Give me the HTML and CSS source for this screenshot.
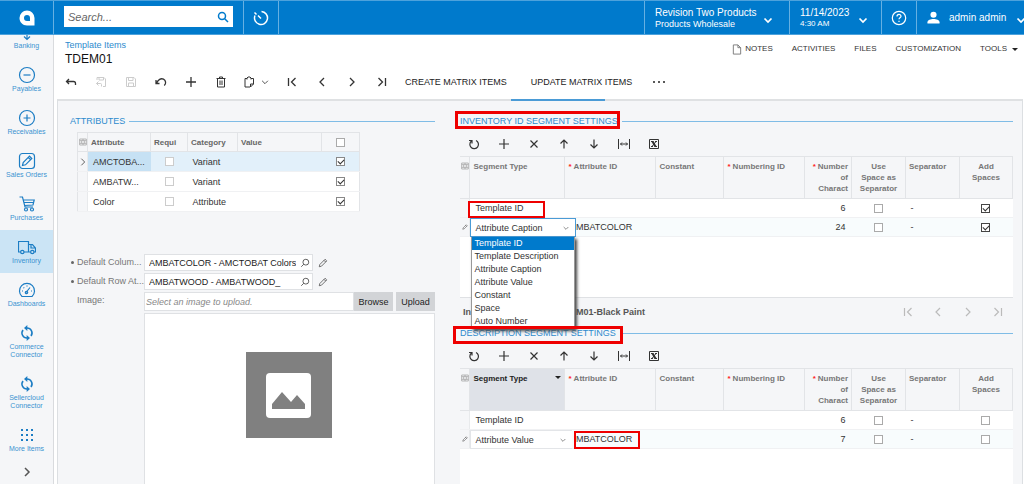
FILE: index.html
```html
<!DOCTYPE html>
<html lang="en">
<head>
<meta charset="utf-8">
<title>Template Items - TDEM01</title>
<link rel="stylesheet" href="styles.css">
</head>
<body>
<svg class="defs" aria-hidden="true">
  <symbol id="i-down" viewBox="0 0 12 12"><path d="M2.500 4.500 6 8l3.500-3.500"/></symbol>
  <symbol id="i-prev" viewBox="0 0 12 12"><path d="M8 2 4 6l4 4"/></symbol>
  <symbol id="i-next" viewBox="0 0 12 12"><path d="M4 2l4 4-4 4"/></symbol>
  <symbol id="i-first" viewBox="0 0 12 12"><path d="M2.500 2v8M9.500 2l-4 4 4 4"/></symbol>
  <symbol id="i-last" viewBox="0 0 12 12"><path d="M9.500 2v8M2.500 2l4 4-4 4"/></symbol>
  <symbol id="i-back" viewBox="0 0 12 12"><path d="M4 3 1.500 5.500 4 8M1.500 5.500h7q2 0 2 2V9"/></symbol>
  <symbol id="i-save" viewBox="0 0 12 12"><path d="M1.500 1.500h7.500l1.500 1.500v7.500h-9zM3.500 1.500v3h4.500v-3M3.500 10.500v-3.500h5v3.500"/></symbol>
  <symbol id="i-saveclose" viewBox="0 0 12 12"><path d="M2 4V1.500h7l1.500 1.500v7.500H8M4 1.500v2.500h4.500v-2.500M3.500 5.500 1.500 7.500l2 2M1.500 7.500h4q1 0 1 1v2"/></symbol>
  <symbol id="i-undo" viewBox="0 0 12 12"><path d="M1 4v3.500h3.500M1.500 7.200C3 3.500 6 2 8.500 3.200c2.500 1.300 2.800 4.300.8 6.300"/></symbol>
  <symbol id="i-plus" viewBox="0 0 12 12"><path d="M6 1v10M1 6h10"/></symbol>
  <symbol id="i-x" viewBox="0 0 12 12"><path d="m2.500 2.500 7 7M9.500 2.500l-7 7"/></symbol>
  <symbol id="i-trash" viewBox="0 0 12 12"><path d="M1.500 2.500h9M4.500 2.500V1h3v1.500M2.500 2.500v8.500h7V2.500M5 4.500v4.500M7 4.500v4.500"/></symbol>
  <symbol id="i-clip" viewBox="0 0 12 12"><path d="M7 11H2V2.500h2M8 2.500h2.500v5.500L7.500 11V8h3M4 3.500V2l1-1h2l1 1v1.500"/></symbol>
  <symbol id="i-up" viewBox="0 0 12 12"><path d="M6 2v8.500M2.500 5.500 6 2l3.500 3.500"/></symbol>
  <symbol id="i-dn" viewBox="0 0 12 12"><path d="M6 1.500V10M2.500 6.500 6 10l3.500-3.500"/></symbol>
  <symbol id="i-refresh" viewBox="0 0 12 12"><path d="M3.500 3A4.300 4.300 0 1 0 8 2.500M1 2.500h3v3"/></symbol>
  <symbol id="i-fit" viewBox="0 0 12 12"><path d="M.5 1v10M11.500 1v10M2.500 6h7M4 4.500 2.500 6 4 7.500M8 4.500 9.500 6 8 7.500"/></symbol>
  <symbol id="i-excel" viewBox="0 0 12 12"><path d="M1.500 1.500h9v9h-9z"/><path class="thick" d="m4.500 3.500 3 5"/><path d="M8 3.500 4 8.500M3 3.500h2.500M7 3.500h2M3 8.500h2M6.500 8.500H9"/></symbol>
  <symbol id="i-cols" viewBox="0 0 12 12"><path d="M1 1.500h10v9H1zM1 4h10M1 8h10M6 1.500V4M6 8v2.500M4 4v4M8 4v4"/></symbol>
  <symbol id="i-pencil" viewBox="0 0 12 12"><path d="m1.500 10.500.7-2.700L8.500 1.500l2 2-6.300 6.300zM7.200 2.800l2 2"/></symbol>
  <symbol id="i-search" viewBox="0 0 12 12"><circle cx="7" cy="5" r="3.500"/><path d="M4.500 7.500 1.500 10.500"/></symbol>
  <symbol id="i-sync" viewBox="0 0 24 24"><path d="M12 4.500A7.500 7.500 0 0 1 18 16.500M12 19.500A7.500 7.500 0 0 1 6 7.500"/><path class="solid" d="M12.500 0v9L7.500 4.500zM11.500 15v9l5-4.500z"/></symbol>
</svg>

<header class="topbar">
  <a class="logo" href="#" aria-label="Home"><svg viewBox="0 0 16 16"><path fill-rule="evenodd" d="M8 .5A7.500 7.500 0 0 0 .5 8c0 4.200 3.300 7.500 7.500 7.500h7.500V8A7.500 7.500 0 0 0 8 .5zM8 5a3 3 0 0 1 3 3v3H8a3 3 0 1 1 0-6z"/></svg></a>
  <form class="searchcell">
    <label class="search"><input type="search" placeholder="Search..." aria-label="Search"><svg class="mag" viewBox="0 0 12 12"><circle cx="5" cy="5" r="3.500"/><path d="m7.500 7.500 3.500 3.500"/></svg></label>
  </form>
  <button class="cell narrow" aria-label="Recent"><svg class="ic16" viewBox="0 0 16 16"><path d="M8.500 1.500A6.500 6.500 0 1 1 2 5.500M8 8.500 5 5.500M1.500 2.500l2 2"/></svg></button>
  <span class="grow"></span>
  <button class="cell company"><span><b>Revision Two Products</b><small>Products Wholesale</small></span><svg class="ic12"><use href="#i-down"/></svg></button>
  <button class="cell date"><span><b>11/14/2023</b><small>4:30 AM</small></span><svg class="ic12"><use href="#i-down"/></svg></button>
  <button class="cell narrow" aria-label="Help"><svg class="ic16 help" viewBox="0 0 16 16"><circle cx="8" cy="8" r="6.700"/><path d="M6 6.500c0-2.700 4-2.700 4-.2 0 1.500-2 1.500-2 3M8 10.800v1.200"/></svg></button>
  <button class="cell user"><svg class="person" viewBox="0 0 14 14"><circle cx="7" cy="4" r="3.300"/><path d="M.5 13.500V12C.5 9.500 4 8.500 7 8.500s6.500 1 6.500 3.500v1.500z"/></svg><b>admin admin</b><svg class="ic12"><use href="#i-down"/></svg></button>
</header>

<div class="shell">
  <nav class="side">
    <a href="#"><svg viewBox="0 0 18 18"><circle cx="9" cy="7" r="4"/><path d="M9 11v6M6 13.500l3 3 3-3"/></svg>Banking</a>
    <a href="#"><svg viewBox="0 0 18 18"><circle cx="9" cy="9" r="7.500"/><path d="M5.500 9h7"/></svg>Payables</a>
    <a href="#"><svg viewBox="0 0 18 18"><circle cx="9" cy="9" r="7.500"/><path d="M5.500 9h7M9 5.500v7"/></svg>Receivables</a>
    <a href="#"><svg viewBox="0 0 18 18"><rect x="1.500" y="1.500" width="15" height="15" rx="3"/><path d="m4.500 13.500.7-3L11.500 4.200l2.300 2.300-6.300 6.300zM10.300 5.500l2.200 2.200"/></svg>Sales Orders</a>
    <a href="#"><svg viewBox="0 0 18 18"><path d="M1.500 2h3l2.500 10h8M5.200 5h11L15 10l-8.500.5M5.800 7.500h9.800"/><circle cx="8" cy="14.500" r="1.500"/><circle cx="14" cy="14.500" r="1.500"/></svg>Purchases</a>
    <a href="#" class="on"><svg viewBox="0 0 18 18"><path d="M2.500 14H.5V3.500h10V14H6M10.500 6.500h4l3 3.500v4H16M12.500 14h-2M13 6.500V10h4"/><circle cx="4.300" cy="14" r="1.700"/><circle cx="14.300" cy="14" r="1.700"/></svg>Inventory</a>
    <a href="#"><svg viewBox="0 0 18 18"><path d="M4 15.500a7.500 7.500 0 1 1 10 0zM8 11.500l4-5M4 10h1M9 4.500v1M13 10h1M5.500 6.500l.7.700"/><circle cx="8.500" cy="11.500" r="1.200"/></svg>Dashboards</a>
    <a href="#" class="tall"><svg viewBox="0 0 24 24" class="sync"><use href="#i-sync"/></svg>Commerce<br>Connector</a>
    <a href="#" class="tall"><svg viewBox="0 0 24 24" class="sync"><use href="#i-sync"/></svg>Sellercloud<br>Connector</a>
    <a href="#"><svg viewBox="0 0 18 18"><path class="solid" d="M3 3h2v2H3zM8 3h2v2H8zM13 3h2v2h-2zM3 8h2v2H3zM8 8h2v2H8zM13 8h2v2h-2zM3 13h2v2H3zM8 13h2v2H8zM13 13h2v2h-2z"/></svg>More Items</a>
    <button class="expand" aria-label="Expand menu"><svg class="ic12"><use href="#i-next"/></svg></button>
  </nav>

  <main class="main">
    <div class="pagehead">
      <div class="titlerow">
        <div><a class="crumb" href="#">Template Items</a><h1>TDEM01</h1></div>
        <div class="links">
          <button><svg class="note" viewBox="0 0 10 12"><path d="M1 1h5l3 3v7H1zM6 1v3h3"/></svg>NOTES</button>
          <button>ACTIVITIES</button><button>FILES</button><button>CUSTOMIZATION</button>
          <button>TOOLS<i class="caret"></i></button>
        </div>
      </div>
      <div class="toolbar">
        <button class="tb" aria-label="Back"><svg class="ic12"><use href="#i-back"/></svg></button>
        <button class="tb" aria-label="Save and close" disabled><svg class="ic12"><use href="#i-saveclose"/></svg></button>
        <button class="tb" aria-label="Save" disabled><svg class="ic12"><use href="#i-save"/></svg></button>
        <button class="tb" aria-label="Undo"><svg class="ic12"><use href="#i-undo"/></svg></button>
        <button class="tb" aria-label="Add"><svg class="ic12"><use href="#i-plus"/></svg></button>
        <button class="tb fine" aria-label="Delete"><svg class="ic12"><use href="#i-trash"/></svg></button>
        <button class="tb wide fine" aria-label="Clipboard"><svg class="ic12"><use href="#i-clip"/></svg><svg class="ic10"><use href="#i-down"/></svg></button>
        <button class="tb" aria-label="First"><svg class="ic12"><use href="#i-first"/></svg></button>
        <button class="tb" aria-label="Previous"><svg class="ic12"><use href="#i-prev"/></svg></button>
        <button class="tb" aria-label="Next"><svg class="ic12"><use href="#i-next"/></svg></button>
        <button class="tb" aria-label="Last"><svg class="ic12"><use href="#i-last"/></svg></button>
        <button class="tbtext">CREATE MATRIX ITEMS</button>
        <button class="tbtext">UPDATE MATRIX ITEMS</button>
        <button class="tb dots" aria-label="More"><i></i><i></i><i></i></button>
      </div>
    </div>

    <div class="content">
      <i class="tabline"></i>
      <section class="left">
        <h2>ATTRIBUTES</h2>
        <table class="grid attrs">
          <colgroup><col class="w10"><col class="w63"><col class="w37"><col class="w50"><col><col class="w38"></colgroup>
          <thead><tr><th><svg class="ic8"><use href="#i-cols"/></svg></th><th>Attribute</th><th>Requi</th><th>Category</th><th>Value</th><th class="c"><input type="checkbox" aria-label="Select all"></th></tr></thead>
          <tbody>
            <tr class="sel"><td class="ind"><svg class="ic10"><use href="#i-next"/></svg></td><td class="cur">AMCTOBA...</td><td class="c"><input type="checkbox" class="pale" aria-label="Required"></td><td>Variant</td><td></td><td class="c"><input type="checkbox" checked aria-label="Active"></td></tr>
            <tr><td class="ind"></td><td>AMBATW...</td><td class="c"><input type="checkbox" class="pale" aria-label="Required"></td><td>Variant</td><td></td><td class="c"><input type="checkbox" checked aria-label="Active"></td></tr>
            <tr><td class="ind"></td><td>Color</td><td class="c"><input type="checkbox" class="pale" aria-label="Required"></td><td>Attribute</td><td></td><td class="c"><input type="checkbox" checked aria-label="Active"></td></tr>
          </tbody>
        </table>
        <div class="fields">
          <div class="row"><label class="req" for="dc">Default Colum...</label><span class="lookup"><input id="dc" value="AMBATCOLOR - AMCTOBAT Colors"><svg class="ic10"><use href="#i-search"/></svg></span><button class="edit" aria-label="Edit"><svg class="ic10"><use href="#i-pencil"/></svg></button></div>
          <div class="row"><label class="req" for="dr">Default Row At...</label><span class="lookup"><input id="dr" value="AMBATWOOD - AMBATWOOD_"><svg class="ic10"><use href="#i-search"/></svg></span><button class="edit" aria-label="Edit"><svg class="ic10"><use href="#i-pencil"/></svg></button></div>
          <div class="row"><label for="im">Image:</label><input id="im" class="file" placeholder="Select an image to upload."><button class="gray">Browse</button><button class="gray upload">Upload</button></div>
        </div>
        <div class="preview"><svg viewBox="0 0 86 86"><path fill="#808080" d="M0 0h86v86H0z"/><rect x="20" y="21" width="45" height="45" rx="4" fill="#fff"/><path fill="#808080" d="M26 57v-5l10-12 9 10 6-7 8 9v5z"/></svg></div>
      </section>

      <section class="right">
        <div class="hl hl-head"><h2>INVENTORY ID SEGMENT SETTINGS</h2></div>
        <div class="gridbar">
          <button aria-label="Refresh"><svg class="ic12"><use href="#i-refresh"/></svg></button><button aria-label="Add row"><svg class="ic12"><use href="#i-plus"/></svg></button><button aria-label="Delete row"><svg class="ic12"><use href="#i-x"/></svg></button><button aria-label="Move up"><svg class="ic12"><use href="#i-up"/></svg></button><button aria-label="Move down"><svg class="ic12"><use href="#i-dn"/></svg></button><button class="fine" aria-label="Fit columns"><svg class="ic12"><use href="#i-fit"/></svg></button><button class="fine" aria-label="Export to Excel"><svg class="ic12"><use href="#i-excel"/></svg></button>
        </div>
        <div class="gridbox first">
          <table class="grid seg">
            <colgroup><col class="w10"><col class="w95"><col class="w91"><col class="w68"><col><col class="w47"><col class="w54"><col class="w54"><col class="w53"></colgroup>
            <thead><tr><th><svg class="ic8"><use href="#i-cols"/></svg></th><th>Segment Type</th><th><em>*</em>Attribute ID</th><th>Constant</th><th><em>*</em>Numbering ID</th><th class="r"><em>*</em>Number<br>of<br>Charact</th><th class="c">Use<br>Space as<br>Separator</th><th>Separator</th><th class="c">Add<br>Spaces</th></tr></thead>
            <tbody>
              <tr><td class="ind"></td><td class="host">Template ID<i class="mark mark-type"></i></td><td></td><td></td><td></td><td class="r">6</td><td class="c"><input type="checkbox" aria-label="Use space"></td><td>-</td><td class="c last"><input type="checkbox" class="dark" checked aria-label="Add spaces"></td></tr>
              <tr class="act"><td class="ind"><svg class="ic6"><use href="#i-pencil"/></svg></td>
                <td class="host">
                  <div class="combo open"><select aria-label="Segment type"><option>Attribute Caption</option></select><svg class="ic8"><use href="#i-down"/></svg>
                    <ul role="listbox"><li class="hot" role="option">Template ID</li><li role="option">Template Description</li><li role="option">Attribute Caption</li><li role="option">Attribute Value</li><li role="option">Constant</li><li role="option">Space</li><li role="option">Auto Number</li></ul>
                  </div>
                </td><td class="after">MBATCOLOR</td><td></td><td></td><td class="r">24</td><td class="c"><input type="checkbox" aria-label="Use space"></td><td>-</td><td class="c last"><input type="checkbox" class="dark" checked aria-label="Add spaces"></td></tr>
            </tbody>
          </table>
        </div>
        <div class="foot"><span class="lead">In</span><span>M01-Black Paint</span>
          <div class="pager"><button disabled aria-label="First page"><svg class="ic12"><use href="#i-first"/></svg></button><button disabled aria-label="Previous page"><svg class="ic12"><use href="#i-prev"/></svg></button><button disabled aria-label="Next page"><svg class="ic12"><use href="#i-next"/></svg></button><button disabled aria-label="Last page"><svg class="ic12"><use href="#i-last"/></svg></button></div>
        </div>
        <div class="hl hl-desc"><h2>DESCRIPTION SEGMENT SETTINGS</h2></div>
        <div class="gridbar">
          <button aria-label="Refresh"><svg class="ic12"><use href="#i-refresh"/></svg></button><button aria-label="Add row"><svg class="ic12"><use href="#i-plus"/></svg></button><button aria-label="Delete row"><svg class="ic12"><use href="#i-x"/></svg></button><button aria-label="Move up"><svg class="ic12"><use href="#i-up"/></svg></button><button aria-label="Move down"><svg class="ic12"><use href="#i-dn"/></svg></button><button class="fine" aria-label="Fit columns"><svg class="ic12"><use href="#i-fit"/></svg></button><button class="fine" aria-label="Export to Excel"><svg class="ic12"><use href="#i-excel"/></svg></button>
        </div>
        <div class="gridbox fill">
          <table class="grid seg">
            <colgroup><col class="w10"><col class="w95"><col class="w91"><col class="w68"><col><col class="w47"><col class="w54"><col class="w54"><col class="w53"></colgroup>
            <thead><tr><th><svg class="ic8"><use href="#i-cols"/></svg></th><th class="sorted">Segment Type<i class="caret"></i></th><th><em>*</em>Attribute ID</th><th>Constant</th><th><em>*</em>Numbering ID</th><th class="r"><em>*</em>Number<br>of<br>Charact</th><th class="c">Use<br>Space as<br>Separator</th><th>Separator</th><th class="c">Add<br>Spaces</th></tr></thead>
            <tbody>
              <tr><td class="ind"></td><td>Template ID</td><td></td><td></td><td></td><td class="r">6</td><td class="c"><input type="checkbox" aria-label="Use space"></td><td>-</td><td class="c last"><input type="checkbox" aria-label="Add spaces"></td></tr>
              <tr class="act"><td class="ind"><svg class="ic6"><use href="#i-pencil"/></svg></td>
                <td class="host"><div class="combo"><select aria-label="Segment type"><option>Attribute Value</option></select><svg class="ic8"><use href="#i-down"/></svg></div></td>
                <td class="after host">MBATCOLOR<i class="mark mark-attr"></i></td><td></td><td></td><td class="r">7</td><td class="c"><input type="checkbox" aria-label="Use space"></td><td>-</td><td class="c last"><input type="checkbox" aria-label="Add spaces"></td></tr>
            </tbody>
          </table>
        </div>
      </section>
    </div>
  </main>
</div>
</body>
</html>
```

FILE: styles.css
```css
*, *::before, *::after { box-sizing: border-box; }
body {
  margin: 0;
  height: 100vh;
  display: flex;
  flex-direction: column;
  overflow: hidden;
  background: #fff;
  color: #333;
  font: 9px/12px "Liberation Sans", Arial, sans-serif;
}
button, input, select { font: inherit; color: inherit; margin: 0; }
button { border: 0; padding: 0; background: none; white-space: nowrap; }
a { text-decoration: none; }
h1, h2, ul { margin: 0; padding: 0; font-weight: normal; }
.defs { position: absolute; width: 0; height: 0; }
svg { fill: none; stroke: currentColor; stroke-width: 1; flex: none; }
.solid { fill: currentColor; stroke: none; }
.thick { stroke-width: 2; }
.ic6 { width: 6px; height: 6px; }
.ic8 { width: 8px; height: 8px; }
.ic10 { width: 10px; height: 10px; }
.ic12 { width: 12px; height: 12px; }
.ic16 { width: 16px; height: 16px; }
.caret { display: inline-block; border: 3px solid transparent; border-top: 3px solid #222; border-bottom: 0; }

/* top bar */
.topbar {
  display: flex;
  flex: none;
  height: 35px;
  background: #007acc;
  border-top: 1px solid #4da2dc;
  border-bottom: 1px solid #4da2dc;
  color: #fff;
}
.logo { width: 53px; display: flex; align-items: center; justify-content: center; color: #fff; }
.logo svg { width: 16px; height: 16px; fill: #fff; stroke: none; }
.searchcell { width: 190px; border-left: 1px solid #66b0e2; padding: 5px 10px 7px; display: flex; }
.search { flex: 1; display: flex; align-items: center; background: #fff; color: #007acc; padding-right: 4px; }
.search input { flex: 1; min-width: 0; border: 0; background: none; padding: 0 4px; font-size: 11px; font-style: italic; outline: 0; }
.search input::placeholder { color: #666; opacity: 1; }
.mag { width: 12px; height: 12px; stroke-width: 1.500; }
.cell { border-left: 1px solid #66b0e2; display: flex; align-items: center; text-align: left; }
.narrow { width: 35px; justify-content: center; }
.narrow .ic16 { stroke-width: 1.500; }
.narrow .help { stroke-width: 1.200; }
.grow { flex: 1; border-left: 1px solid #66b0e2; }
.cell b { display: block; font-weight: normal; font-size: 10px; }
.cell small { display: block; font-size: 8px; line-height: 10px; }
.cell .ic12 { stroke-width: 1.700; margin-top: 4px; }
.company { width: 145px; padding: 0 15px 0 10px; justify-content: space-between; }
.company small { font-size: 9px; }
.date { width: 92px; padding: 0 12px 0 10px; justify-content: space-between; }
.user { width: 108px; padding-left: 10px; gap: 9px; overflow: hidden; }
.person { width: 13px; height: 13px; fill: #fff; stroke: none; }

.shell { flex: 1; min-height: 0; display: flex; }

/* sidebar */
.side { width: 54px; flex: none; overflow: hidden; background: #f5f6f8; border-right: 1px solid #d9dbde; display: flex; flex-direction: column; }
.side a { flex: none; min-height: 43px; padding: 8px 0 4px; display: block; text-align: center; color: #3b93d1; font-size: 7px; line-height: 8px; }
.side a:first-child { margin-top: -20px; }
.side .tall { min-height: 51px; }
.side svg { display: block; width: 18px; height: 18px; margin: 0 auto 1px; color: #1c7dc4; stroke-width: 1.200; }
.side .sync { stroke-width: 2.400; padding: 1px; }
.side .on { background: #cbe4f5; }
.expand { flex: none; height: 22px; }
.side .expand svg { width: 12px; height: 12px; color: #555; stroke-width: 1.500; margin: 0 auto; }

/* page head */
.main { flex: 1; min-width: 0; display: flex; flex-direction: column; padding: 0 1px 0 3px; }
.pagehead { flex: none; padding: 5px 5px 5px 8px; }
.titlerow { display: flex; justify-content: space-between; }
.crumb { display: block; color: #2d8bce; line-height: 11px; }
h1 { font-size: 12px; line-height: 16px; color: #111; }
.links { display: flex; gap: 19px; align-items: center; height: 18px; }
.links button { display: flex; align-items: center; font-size: 8px; gap: 3px; color: #333; }
.links .caret { margin-left: 2px; }
.note { width: 10px; height: 11px; stroke-width: 1; color: #777; }
.toolbar { display: flex; align-items: center; height: 24px; margin: 3px 0 0 -9px; }
.tb { width: 30px; height: 24px; display: flex; align-items: center; justify-content: center; color: #333; }
.tb svg { stroke-width: 1.300; }
.tb:disabled { color: #ccc; }
.tb:disabled svg, .fine svg { stroke-width: 1; }
.wide { width: 41px; gap: 5px; }
.tbtext { margin: 0 16px 0 8px; color: #222; }
.dots { gap: 3px; margin-left: -4px; }
.dots i { width: 2px; height: 2px; border-radius: 1px; background: #222; }

/* content */
.content {
  flex: 1;
  min-height: 0;
  position: relative;
  display: grid;
  grid-template-columns: minmax(0, 33fr) minmax(0, 50fr);
  gap: 25px;
  padding: 12px 9px 0 12px;
  background: #f5f6f8;
  border: 1px solid #dcdfe2;
  border-top: 2px solid #dfe1e3;
  border-bottom: 0;
}
.tabline { position: absolute; top: -2px; left: 47%; width: 94px; height: 2px; background: #4a9bd6; }
.left, .right { display: flex; flex-direction: column; min-height: 0; }
h2 { display: flex; align-items: center; gap: 4px; height: 16px; font-size: 9px; color: #2d8bce; white-space: nowrap; }
h2::after { content: ""; flex: 1; height: 1px; background: #7fbce6; }

.grid { border-collapse: collapse; table-layout: fixed; width: 100%; }
.w10 { width: 10px; } .w37 { width: 37px; } .w38 { width: 38px; } .w47 { width: 47px; }
.w50 { width: 50px; } .w53 { width: 53px; } .w54 { width: 54px; } .w63 { width: 63px; }
.w68 { width: 68px; } .w91 { width: 91px; } .w95 { width: 95px; }
.grid th { background: #f5f6f8; border: 1px solid #e2e4e7; border-left: 0; padding: 0 3px; text-align: left; font-size: 8px; line-height: 11px; color: #666; white-space: nowrap; }
.grid th:first-child { padding: 0; text-align: center; color: #999; }
.grid td { padding: 0 5px; white-space: nowrap; border-bottom: 1px solid #f0f1f3; background: #fff; }
.grid th.c, .grid td.c { text-align: center; }
.grid th.r, .grid td.r { text-align: right; }
.grid em { color: #f22; font-style: normal; margin-right: 2px; }
.grid .ind { background: #f5f6f8; padding: 0; text-align: center; border-right: 1px solid #e8eaec; color: #444; }
.grid svg { display: block; margin: 0 auto; }
input[type="checkbox"] { appearance: none; display: block; width: 9px; height: 9px; margin: 0 auto; border: 1px solid #aaa; background: #fff; }
input[type="checkbox"].pale { border-color: #ccc; }
input[type="checkbox"].dark { border-color: #444; }
input[type="checkbox"]:checked::after { content: ""; display: block; width: 6px; height: 4px; margin: 1px 0 0 1px; border-left: 1px solid #333; border-bottom: 1px solid #333; transform: rotate(-45deg); }
.attrs input[type="checkbox"]:checked { border-color: #888; }

.attrs { width: 283px; margin: 3px 0 0 7px; border: 1px solid #e2e4e7; }
.attrs th { height: 19px; }
.attrs td { height: 20px; }
.attrs .sel td { background: #e2f0fa; }
.attrs .sel .cur { background: #c6e1f4; }
.attrs .sel .ind { background: #f5f6f8; }

.fields { display: grid; gap: 2px; margin-top: 42px; }
.row { display: flex; height: 17px; align-items: stretch; color: #777; }
.row:last-child { height: 19px; }
.row label { width: 74px; flex: none; padding-left: 7px; line-height: 17px; position: relative; white-space: nowrap; }
.req::before { content: ""; position: absolute; left: 1px; top: 7px; width: 3px; height: 3px; border-radius: 2px; background: #666; }
.lookup { width: 169px; display: flex; align-items: center; background: #fff; border: 1px solid #dfe1e4; padding-right: 2px; color: #444; }
.lookup input { flex: 1; min-width: 0; border: 0; padding: 0 4px; background: none; color: #222; }
.edit { margin-left: 5px; color: #555; display: flex; align-items: center; }
.file { flex: 1; min-width: 0; border: 1px solid #dfe1e4; padding: 0 1px; background: #fff; }
.file::placeholder { font-style: italic; color: #888; opacity: 1; }
.gray { width: 39px; background: #d2d4d7; color: #222; }
.upload { margin-left: 3px; }
.preview { flex: 1; min-height: 0; margin: 2px 0 0 74px; padding-top: 38px; background: #fff; border: 1px solid #dfe1e4; border-bottom: 0; text-align: center; }
.preview svg { width: 86px; height: 86px; stroke: none; }

/* segment panels */
.gridbar { display: flex; height: 27px; padding-top: 3px; flex: none; margin-left: -1px; }
.gridbar button, .pager button { width: 30px; display: flex; align-items: center; justify-content: center; color: #333; }
.gridbar svg, .pager svg { stroke-width: 1.200; }
.gridbar .fine svg { stroke-width: 1; }
.gridbox { background: #fff; }
.first { min-height: 142px; border-bottom: 1px solid #dfe1e4; }
.fill { flex: 1; min-height: 0; }
.seg th { height: 42px; vertical-align: top; padding-top: 4px; color: #777; }
.seg th:first-child { padding-top: 5px; }
.seg td { height: 19px; }
.seg .sorted { background: #dfe2e8; color: #222; }
.sorted .caret { float: right; margin: 3px 0 0; }
.seg .r { padding-right: 6px; }
.seg th.r { padding-right: 3px; }
.seg .act td { background: #f8fcfd; }
.seg .act .ind { background: #f5f6f8; }
.seg .after { padding-left: 11px; }
.seg .last { padding-left: 3px; }
.host { position: relative; }
.combo { position: absolute; z-index: 2; top: 0; left: 0; width: 102px; height: 19px; background: #fff; border: 1px solid #e3e5e8; border-right: 0; }
.combo.open { width: 106px; border: 1px solid #4a9bd6; }
.combo select { appearance: none; width: 100%; height: 100%; border: 0; padding: 0 4px; background: none; display: block; outline: 0; }
.combo > svg { position: absolute; right: 5px; top: 5px; color: #555; pointer-events: none; }
.combo ul { position: absolute; top: 18px; left: 0; right: 0; background: #fff; list-style: none; border: 1px solid #999; border-top: 0; box-shadow: 2px 2px 3px #444; }
.combo li { height: 13px; line-height: 13px; padding-left: 2px; }
.combo .hot { background: #007acc; color: #fff; }
.foot { display: flex; align-items: center; flex: none; height: 27px; padding-left: 3px; font-weight: bold; color: #555; }
.lead { width: 113px; }
.pager { display: flex; margin-left: auto; }
.pager button:disabled { color: #bbb; }

/* highlight frames drawn over the panels */
.hl { position: relative; flex: none; }
.hl::after { content: ""; position: absolute; z-index: 3; top: -2px; height: 18px; left: -5px; width: 165px; border: 3px solid #e00; }
.hl-desc::after { top: 1px; left: -7px; width: 170px; }
.mark { position: absolute; z-index: 3; border: 2px solid #e00; pointer-events: none; }
.mark-type { left: -2px; top: 2px; width: 77px; height: 17px; }
.mark-attr { left: 9px; top: 1px; width: 66px; height: 18px; }
```
